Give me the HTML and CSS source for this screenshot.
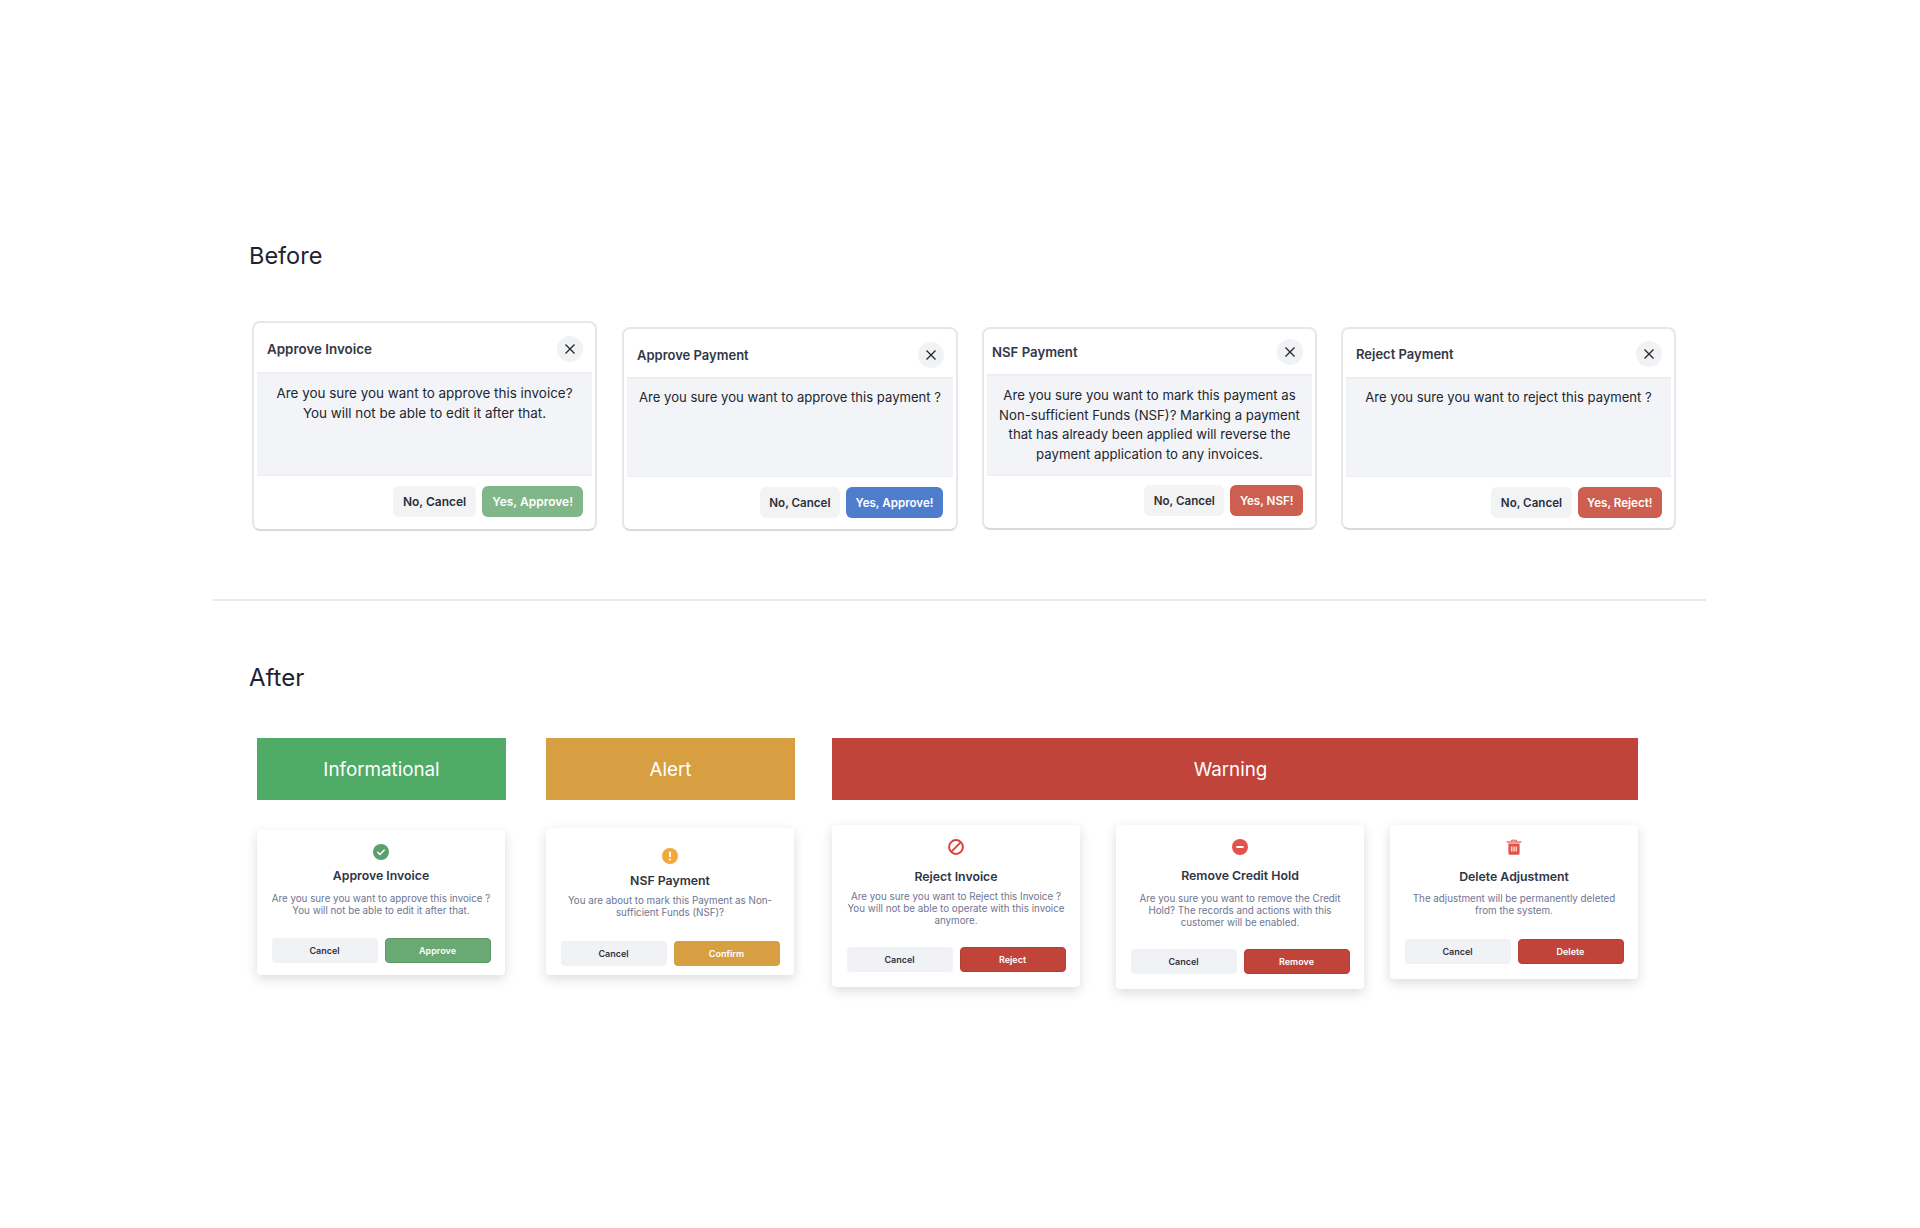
FILE: index.html
```html
<!DOCTYPE html>
<html lang="en">
<head>
<meta charset="utf-8">
<title>Confirmation dialogs: before and after</title>
<link rel="stylesheet" href="styles.css">
</head>
<body>
<main class="page">
  <section class="before">
    <h2 class="heading">Before</h2>
    <div class="old-row">
      <article class="old-card old-card--one">
        <header class="old-head"><h3 class="old-title">Approve Invoice</h3><button class="close"><svg viewBox="0 0 12 12" class="close-icon"><path d="M1.5 1.5l9 9M10.5 1.5l-9 9"/></svg></button></header>
        <p class="old-body">Are you sure you want to approve this invoice?<br>You will not be able to edit it after that.</p>
        <footer class="old-foot"><button class="old-btn old-btn--cancel">No, Cancel</button><button class="old-btn old-btn--green">Yes, Approve!</button></footer>
      </article>
      <article class="old-card old-card--two">
        <header class="old-head"><h3 class="old-title">Approve Payment</h3><button class="close"><svg viewBox="0 0 12 12" class="close-icon"><path d="M1.5 1.5l9 9M10.5 1.5l-9 9"/></svg></button></header>
        <p class="old-body">Are you sure you want to approve this payment ?</p>
        <footer class="old-foot"><button class="old-btn old-btn--cancel">No, Cancel</button><button class="old-btn old-btn--blue">Yes, Approve!</button></footer>
      </article>
      <article class="old-card old-card--three">
        <header class="old-head"><h3 class="old-title">NSF Payment</h3><button class="close"><svg viewBox="0 0 12 12" class="close-icon"><path d="M1.5 1.5l9 9M10.5 1.5l-9 9"/></svg></button></header>
        <p class="old-body">Are you sure you want to mark this payment as Non-sufficient Funds (NSF)? Marking a payment that has already been applied will reverse the payment application to any invoices.</p>
        <footer class="old-foot"><button class="old-btn old-btn--cancel">No, Cancel</button><button class="old-btn old-btn--red">Yes, NSF!</button></footer>
      </article>
      <article class="old-card old-card--four">
        <header class="old-head"><h3 class="old-title">Reject Payment</h3><button class="close"><svg viewBox="0 0 12 12" class="close-icon"><path d="M1.5 1.5l9 9M10.5 1.5l-9 9"/></svg></button></header>
        <p class="old-body">Are you sure you want to reject this payment ?</p>
        <footer class="old-foot"><button class="old-btn old-btn--cancel">No, Cancel</button><button class="old-btn old-btn--red">Yes, Reject!</button></footer>
      </article>
    </div>
  </section>

  <hr class="divider">

  <section class="after">
    <h2 class="heading heading--after">After</h2>
    <div class="groups">
      <div class="group group--info">
        <div class="band band--green">Informational</div>
        <div class="cards">
          <article class="card card--a">
            <svg class="icon" viewBox="0 0 16 16"><circle cx="8" cy="8" r="8" fill="#5c9f6e"/><path d="M4.6 8.3l2.3 2.2 4.4-4.6" fill="none" stroke="#fff" stroke-width="1.4" stroke-linecap="round" stroke-linejoin="round"/></svg>
            <h3 class="card-title">Approve Invoice</h3>
            <p class="card-text">Are you sure you want to approve this invoice ?<br>You will not be able to edit it after that.</p>
            <div class="actions"><button class="btn btn--cancel">Cancel</button><button class="btn btn--approve">Approve</button></div>
          </article>
        </div>
      </div>
      <div class="group group--alert">
        <div class="band band--amber">Alert</div>
        <div class="cards">
          <article class="card card--b">
            <svg class="icon" viewBox="0 0 16 16"><circle cx="8" cy="8" r="8" fill="#f2a93b"/><rect x="7" y="3.4" width="2" height="5.8" rx="1" fill="#fff"/><circle cx="8" cy="11.5" r="1.1" fill="#fff"/></svg>
            <h3 class="card-title">NSF Payment</h3>
            <p class="card-text">You are about to mark this Payment as Non-<br>sufficient Funds (NSF)?</p>
            <div class="actions"><button class="btn btn--cancel">Cancel</button><button class="btn btn--confirm">Confirm</button></div>
          </article>
        </div>
      </div>
      <div class="group group--warning">
        <div class="band band--red">Warning</div>
        <div class="cards cards--warning">
          <article class="card card--c">
            <svg class="icon" viewBox="0 0 16 16"><circle cx="8" cy="8" r="6.9" fill="none" stroke="#e0413a" stroke-width="2"/><path d="M3.4 12.6l9.2-9.2" stroke="#e0413a" stroke-width="2"/></svg>
            <h3 class="card-title">Reject Invoice</h3>
            <p class="card-text">Are you sure you want to Reject this Invoice ?<br>You will not be able to operate with this invoice<br>anymore.</p>
            <div class="actions"><button class="btn btn--cancel">Cancel</button><button class="btn btn--danger">Reject</button></div>
          </article>
          <article class="card card--d">
            <svg class="icon" viewBox="0 0 16 16"><circle cx="8" cy="8" r="8" fill="#e4534a"/><rect x="4.2" y="7" width="7.6" height="2" rx="1" fill="#fff"/></svg>
            <h3 class="card-title">Remove Credit Hold</h3>
            <p class="card-text">Are you sure you want to remove the Credit<br>Hold? The records and actions with this<br>customer will be enabled.</p>
            <div class="actions"><button class="btn btn--cancel">Cancel</button><button class="btn btn--danger">Remove</button></div>
          </article>
          <article class="card card--e">
            <svg class="icon" viewBox="0 0 16 16"><path d="M5.6 2.6V1.2h4.8v1.4" fill="none" stroke="#e4534a" stroke-width="1"/><path d="M.6 3h14.8" stroke="#e4534a" stroke-width="1.2"/><path d="M2.4 4.6h11.2v9.6a1.6 1.6 0 0 1-1.6 1.6H4a1.6 1.6 0 0 1-1.6-1.6z" fill="#e4534a"/><path d="M5.8 7.6v4.8M8 7.6v4.8M10.2 7.6v4.8" stroke="#fff" stroke-width="1.1"/></svg>
            <h3 class="card-title">Delete Adjustment</h3>
            <p class="card-text">The adjustment will be permanently deleted<br>from the system.</p>
            <div class="actions"><button class="btn btn--cancel">Cancel</button><button class="btn btn--danger">Delete</button></div>
          </article>
        </div>
      </div>
    </div>
  </section>
</main>
</body>
</html>
```

FILE: styles.css
```css
* { box-sizing: border-box; }

html, body { margin: 0; background: #fff; }

body {
  height: 1228px;
  overflow: hidden;
  font-family: Inter, "Noto Sans", sans-serif;
  color: #1f2533;
}

button { font-family: inherit; cursor: pointer; }

.page { padding-top: 241px; }

.heading {
  margin: 0 0 50px 249px;
  font-size: 23.5px;
  line-height: 30px;
  font-weight: 400;
  color: #1c2230;
}

.heading--after { margin-bottom: 45px; font-size: 24px; }

.divider {
  height: 2px;
  margin: 68px 214px 62px 213px;
  border: 0;
  background: #e8e9ec;
}

/* Before */
.old-row {
  display: flex;
  align-items: flex-end;
  margin-left: 252px;
  gap: 24px;
}

.old-card {
  --title-size: 13px;
  --body-size: 13.1px;
  --btn-size: 11.6px;
  --btn-pad: 9.5px;
  display: flex;
  flex-direction: column;
  width: 336px;
  padding: 0 3px;
  border: 2px solid #e6e7ea;
  border-bottom-color: #d9dadd;
  border-radius: 8px;
  background: #fff;
}

.old-head {
  display: flex;
  align-items: center;
  justify-content: space-between;
  padding: 0 9px 0 10px;
}

.old-title {
  margin: 0;
  font-size: var(--title-size);
  line-height: 18px;
  font-weight: 600;
  color: #333845;
}

.close {
  display: flex;
  align-items: center;
  justify-content: center;
  width: 26px;
  height: 26px;
  padding: 0;
  border: 0;
  border-radius: 50%;
  background: #f1f2f4;
}

.close-icon {
  width: 12px;
  height: 12px;
  fill: none;
  stroke: #23262e;
  stroke-width: 1.3;
}

.old-body {
  margin: 0;
  padding: 10px 6px 0;
  border-top: 2px solid #edeef1;
  border-bottom: 1px solid #edeef1;
  background: #f3f4f8;
  font-size: var(--body-size);
  line-height: 19.7px;
  font-weight: 400;
  text-align: center;
  color: #22262f;
}

.old-foot {
  display: flex;
  justify-content: flex-end;
  gap: 6px;
  padding: 10px 9px 0 0;
}

.old-btn {
  height: 31px;
  padding: 0 var(--btn-pad);
  border: 0;
  border-radius: 6px;
  font-size: var(--btn-size);
  font-weight: 600;
  color: #fff;
}

.old-btn--cancel { background: #f2f3f5; color: #2b2f3a; }
.old-btn--green { background: #81b688; }
.old-btn--blue { background: #4f7dcd; }
.old-btn--red { background: #cd5f50; }

.old-card--one {
  --title-size: 13.4px;
  --body-size: 13.45px;
  --btn-size: 12px;
  --btn-pad: 10px;
  width: 345px;
  height: 210px;
  margin-right: 1px;
}
.old-card--one .old-head { height: 49px; padding-top: 2px; }
.old-card--one .old-body { height: 104px; }

.old-card--two { height: 204px; }
.old-card--two .old-head { height: 48px; padding-top: 3px; }
.old-card--two .old-body { height: 100px; padding-top: 9px; }
.old-card--two .old-foot { padding-right: 10px; }

.old-card--three { --title-size: 13.2px; --body-size: 13.2px; width: 335px; height: 203px; margin-bottom: 1px; }
.old-card--three .old-head { height: 45px; padding-left: 5px; }
.old-card--three .old-body { height: 102px; }
.old-card--three .old-foot { padding-top: 9px; }

.old-card--four { width: 335px; height: 203px; margin-bottom: 1px; }
.old-card--four .old-head { height: 48px; padding-top: 2px; }
.old-card--four .old-body { height: 100px; padding-top: 9px; }

/* After */
.groups {
  display: flex;
  align-items: flex-start;
  margin-left: 257px;
}

.group { flex: none; }
.group--info { width: 249px; margin-right: 40px; }
.group--alert { width: 249px; margin-right: 37px; }
.group--warning { width: 806px; }

.band {
  display: flex;
  align-items: center;
  justify-content: center;
  height: 62px;
  padding-top: 1px;
  font-size: 18.8px;
  font-weight: 400;
  color: #fff;
}

.band--green { background: #4fab65; }
.band--amber { background: #d79f42; }
.band--red { padding-right: 9px; background: #c1443a; }

.cards { display: flex; align-items: flex-start; }

.cards--warning { gap: 26px; }
.cards--warning .card--c { margin-right: 10px; }

.card {
  display: flex;
  flex-direction: column;
  align-items: center;
  width: 248px;
  border-radius: 4px;
  background: #fff;
  box-shadow: 0 4px 12px rgba(30, 35, 50, 0.16);
  padding-top: var(--pad-top);
  padding-bottom: var(--pad-bottom);
  margin-top: var(--top);
  --top: 25px;
  --pad-top: 14px;
  --pad-bottom: 15px;
  --title-gap: 13px;
  --text-gap: 8px;
  --actions-gap: 21px;
}

.card--a { --top: 30px; --title-gap: 8px; --text-gap: 9px; --pad-bottom: 12px; }
.card--b { --top: 28px; --pad-top: 20px; --pad-bottom: 9px; --title-gap: 9px; --text-gap: 6px; --actions-gap: 22px; }
.card--c { --title-gap: 14px; --text-gap: 6px; }
.card--d { --text-gap: 9px; }
.card--e { --title-gap: 14px; --actions-gap: 22px; }

.icon {
  flex: none;
  width: 16px;
  height: 16px;
}

.card-title {
  margin: var(--title-gap) 0 0;
  font-size: 12.3px;
  line-height: 16px;
  font-weight: 600;
  color: #2f3444;
}

.card-text {
  margin: var(--text-gap) 0 0;
  font-size: 9.8px;
  line-height: 11.8px;
  text-align: center;
  color: #6e7491;
}

.actions {
  display: flex;
  justify-content: center;
  gap: 7px;
  margin-top: var(--actions-gap);
}

.btn {
  width: 106px;
  height: 25px;
  padding: 0;
  border: 1px solid transparent;
  border-radius: 4px;
  font-size: 9px;
  font-weight: 600;
  color: #fff;
}

.btn--cancel { background: #f1f2f6; color: #2f3444; }
.btn--approve { background: #6aa974; border-color: #5b9a67; }
.btn--confirm { background: #d79f42; }
.btn--danger { background: #c1443a; border-color: #b63c33; }
```
